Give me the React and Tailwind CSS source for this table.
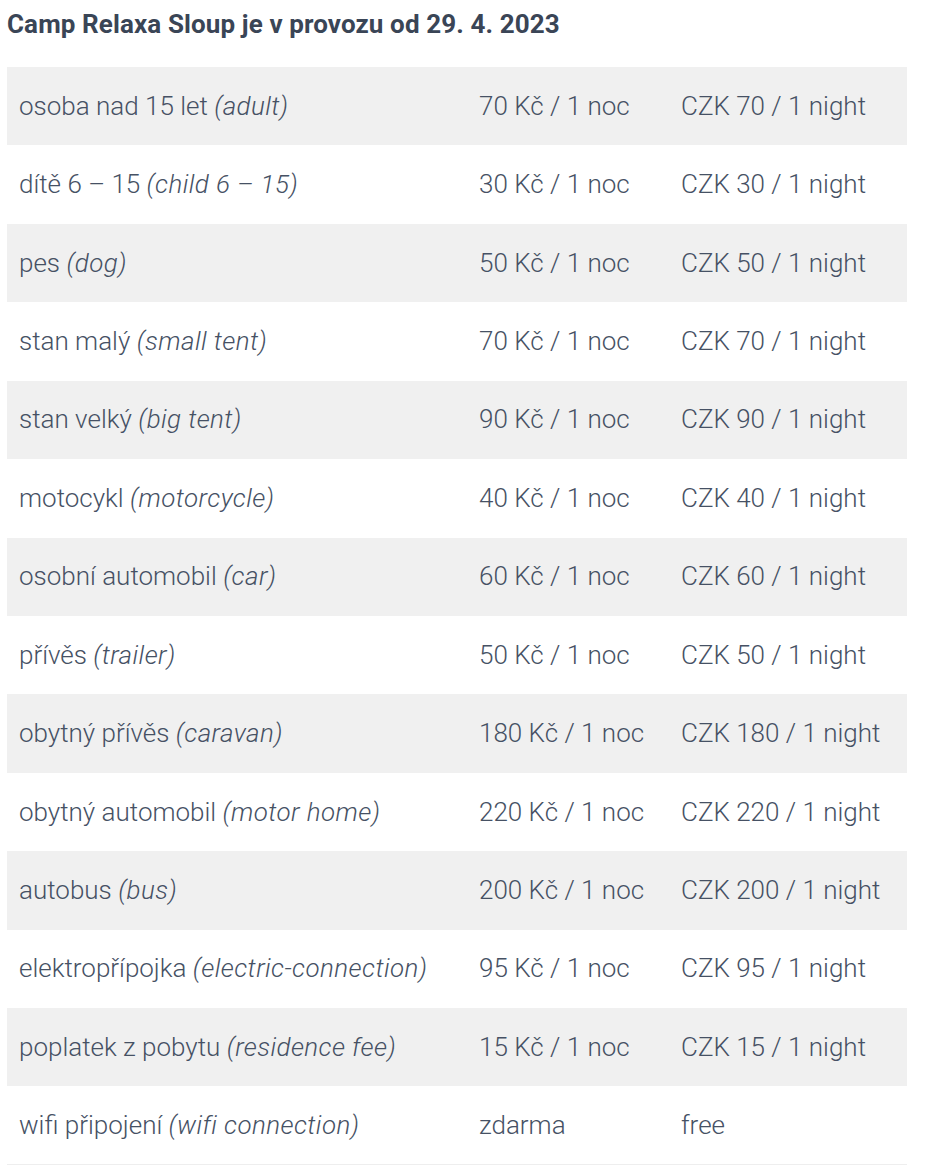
const ROWS = [
    ['osoba nad 15 let ', 'adult', '70 Kč / 1 noc', 'CZK 70 / 1 night'],
    ['dítě 6 – 15 ', 'child 6 – 15', '30 Kč / 1 noc', 'CZK 30 / 1 night'],
    ['pes ', 'dog', '50 Kč / 1 noc', 'CZK 50 / 1 night'],
    ['stan malý ', 'small tent', '70 Kč / 1 noc', 'CZK 70 / 1 night'],
    ['stan velký ', 'big tent', '90 Kč / 1 noc', 'CZK 90 / 1 night'],
    ['motocykl ', 'motorcycle', '40 Kč / 1 noc', 'CZK 40 / 1 night'],
    ['osobní automobil ', 'car', '60 Kč / 1 noc', 'CZK 60 / 1 night'],
    ['přívěs ', 'trailer', '50 Kč / 1 noc', 'CZK 50 / 1 night'],
    ['obytný přívěs ', 'caravan', '180 Kč / 1 noc', 'CZK 180 / 1 night'],
    ['obytný automobil ', 'motor home', '220 Kč / 1 noc', 'CZK 220 / 1 night'],
    ['autobus ', 'bus', '200 Kč / 1 noc', 'CZK 200 / 1 night'],
    ['elektropřípojka ', 'electric-connection', '95 Kč / 1 noc', 'CZK 95 / 1 night'],
    ['poplatek z pobytu ', 'residence fee', '15 Kč / 1 noc', 'CZK 15 / 1 night'],
    ['wifi připojení ', 'wifi connection', 'zdarma', 'free'],
];

function App() {
    return (
        <div
            className="min-h-[1172px] bg-white px-[7px] pt-[8px] text-[#465164]"
            style={{ fontFamily: '"Roboto Light", Roboto, "Liberation Sans", sans-serif' }}
        >
            <h2
                className="text-[26px] font-bold leading-[32px] tracking-[0.11px] text-[#3a4556]"
                style={{ fontFamily: 'Roboto, "Liberation Sans", sans-serif' }}
            >
                Camp Relaxa Sloup je v provozu od 29. 4. 2023
            </h2>
            <table className="mt-[27px] w-[900px] table-fixed border-collapse border-b border-[#eeeeee] text-[26px] font-light">
                <colgroup>
                    <col className="w-[460px]" />
                    <col className="w-[202px]" />
                    <col className="w-[238px]" />
                </colgroup>
                <tbody>
                    {ROWS.map((row, i) => (
                        <tr
                            key={row[1]}
                            className={`h-[78.43px] ${i % 2 === 0 ? 'bg-[#f0f0f0]' : 'bg-white'}`}
                        >
                            <td className="px-[12px] align-middle whitespace-nowrap">
                                {row[0]}
                                <em className="italic tracking-[0.4px]">({row[1]})</em>
                            </td>
                            <td className="px-[12px] align-middle whitespace-nowrap">{row[2]}</td>
                            <td className="px-[12px] align-middle whitespace-nowrap">{row[3]}</td>
                        </tr>
                    ))}
                </tbody>
            </table>
        </div>
    );
}

export default App;
